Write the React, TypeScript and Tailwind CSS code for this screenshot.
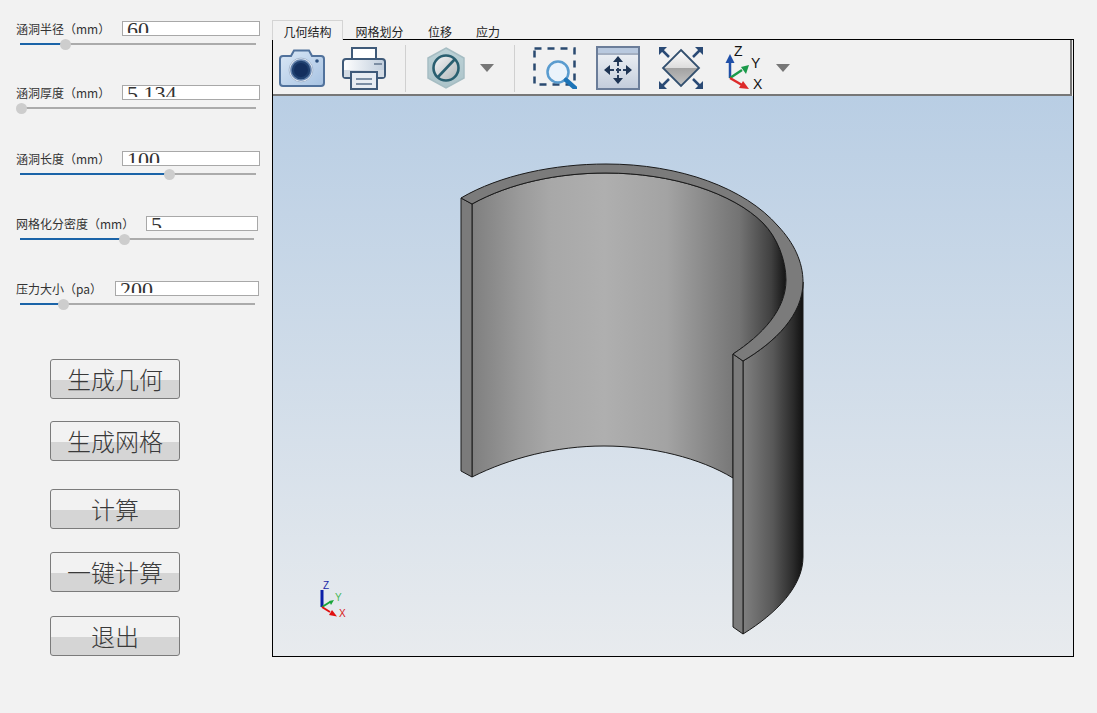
const cjk = "font-['Microsoft_YaHei','Noto_Sans_CJK_SC',sans-serif]";

const params = [
  { label: "涵洞半径（mm）", value: "60", rowClass: "h-[64px]", labelClass: "w-[106px]", inputClass: "w-[138px]", trackClass: "w-[236px]", pct: 45 },
  { label: "涵洞厚度（mm）", value: "5.134", rowClass: "h-[66px]", labelClass: "w-[106px]", inputClass: "w-[138px]", trackClass: "w-[236px]", pct: 1 },
  { label: "涵洞长度（mm）", value: "100", rowClass: "h-[65px]", labelClass: "w-[106px]", inputClass: "w-[138px]", trackClass: "w-[236px]", pct: 149 },
  { label: "网格化分密度（mm）", value: "5", rowClass: "h-[65px]", labelClass: "w-[130px]", inputClass: "w-[112px]", trackClass: "w-[234px]", pct: 104 },
  { label: "压力大小（pa）", value: "200", rowClass: "h-[30px]", labelClass: "w-[99px]", inputClass: "w-[144px]", trackClass: "w-[235px]", pct: 43 },
];

const buttons = [
  { text: "生成几何", mt: "mt-0" },
  { text: "生成网格", mt: "mt-[22px]" },
  { text: "计算", mt: "mt-[28px]" },
  { text: "一键计算", mt: "mt-[23px]" },
  { text: "退出", mt: "mt-[24px]" },
];

function Camera() {
  return (
    <svg width="48" height="40" viewBox="0 0 48 40" className="shrink-0">
      <defs>
        <linearGradient id="camBody" x1="0" y1="0" x2="1" y2="1">
          <stop offset="0" stopColor="#dbe8f6" />
          <stop offset="1" stopColor="#a6c2e2" />
        </linearGradient>
      </defs>
      <path d="M2 11q0-3 3-3h8l3-5.500h15l3 5.500h9q3 0 3 3v24q0 3-3 3H5q-3 0-3-3z" fill="url(#camBody)" stroke="#51729c" strokeWidth="2" />
      <circle cx="23" cy="22" r="12" fill="#e8eef6" stroke="#a9bbd2" strokeWidth="1" />
      <circle cx="23" cy="22" r="10" fill="#20406f" stroke="#6482ac" strokeWidth="1.500" />
      <circle cx="23" cy="22" r="7" fill="#142f5e" />
      <circle cx="39" cy="13" r="1.800" fill="#2c507f" />
    </svg>
  );
}

function Printer() {
  return (
    <svg width="46" height="46" viewBox="0 0 46 46" className="shrink-0">
      <defs>
        <linearGradient id="prBody" x1="0" y1="0" x2="1" y2="0">
          <stop offset="0" stopColor="#ffffff" />
          <stop offset="1" stopColor="#c0cddc" />
        </linearGradient>
      </defs>
      <path d="M11 14V3h24v11" fill="#fff" stroke="#3f5a79" strokeWidth="2" />
      <path d="M9 33H5q-3 0-3-3V17q0-3 3-3h36q3 0 3 3v13q0 3-3 3h-4" fill="url(#prBody)" stroke="#3f5a79" strokeWidth="2" />
      <path d="M3 25h40v7H3z" fill="#d3dbe4" />
      <rect x="33" y="18" width="8" height="2" fill="#7d8ea3" />
      <path d="M10 27h26v17H10z" fill="#e7ecf2" stroke="#3f5a79" strokeWidth="2" />
      <path d="M15 34h16M15 39h16" stroke="#7a8da3" strokeWidth="2" />
    </svg>
  );
}

function Forbidden() {
  return (
    <svg width="38" height="42" viewBox="0 0 38 42" className="shrink-0">
      <defs>
        <linearGradient id="hexFill" x1="0" y1="0" x2="0" y2="1">
          <stop offset="0" stopColor="#bcd2d7" />
          <stop offset="1" stopColor="#acc3c9" />
        </linearGradient>
        <linearGradient id="discFill" x1="0" y1="0" x2="1" y2="1">
          <stop offset="0" stopColor="#f6f7f8" />
          <stop offset="1" stopColor="#aeb4b7" />
        </linearGradient>
      </defs>
      <path d="M19 1l18 10v20L19 41 1 31V11z" fill="url(#hexFill)" stroke="#a6bdc3" strokeWidth="1.500" />
      <circle cx="19" cy="21" r="12.500" fill="url(#discFill)" stroke="#2a5f70" strokeWidth="2.600" />
      <path d="M11 30L28 12" stroke="#2a5f70" strokeWidth="2.600" />
    </svg>
  );
}

function Caret() {
  return (
    <svg width="14" height="8" viewBox="0 0 14 8" className="shrink-0">
      <path d="M0 0h14L7 8z" fill="#777" />
    </svg>
  );
}

function ZoomArea() {
  return (
    <svg width="44" height="42" viewBox="0 0 44 42" className="shrink-0">
      <rect x="1.500" y="1.500" width="40" height="36" fill="none" stroke="#2a4a70" strokeWidth="2.500" strokeDasharray="7 6" />
      <circle cx="25" cy="25" r="10.500" fill="#eaf3fb" stroke="#5a9ccf" strokeWidth="2.500" />
      <path d="M33 33l9 8" stroke="#1d74b7" strokeWidth="4.500" strokeLinecap="round" />
    </svg>
  );
}

function FitWindow() {
  return (
    <svg width="44" height="44" viewBox="0 0 44 44" className="shrink-0">
      <defs>
        <linearGradient id="fitFill" x1="0" y1="0" x2="0" y2="1">
          <stop offset="0" stopColor="#f3f5f8" />
          <stop offset="1" stopColor="#c2ccdb" />
        </linearGradient>
      </defs>
      <rect x="1" y="1" width="42" height="42" fill="url(#fitFill)" stroke="#6b7d99" strokeWidth="2" />
      <rect x="2" y="2" width="40" height="5" fill="#b9c9df" />
      <path d="M2 8h40" stroke="#5d7190" strokeWidth="1" />
      <path d="M22 15v18M13 24h18" stroke="#2a3f5f" strokeWidth="2" strokeDasharray="5 2" />
      <path d="M22 10l5 6h-10zM22 38l5-6h-10zM8 24l6-5v10zM36 24l-6-5v10z" fill="#1e3454" />
    </svg>
  );
}

function Diamond() {
  return (
    <svg width="46" height="44" viewBox="0 0 46 44" className="shrink-0">
      <defs>
        <linearGradient id="diaTop" x1="0" y1="0" x2="0" y2="1">
          <stop offset="0" stopColor="#ffffff" />
          <stop offset="1" stopColor="#dcdcdc" />
        </linearGradient>
        <linearGradient id="diaBottom" x1="0" y1="0" x2="0" y2="1">
          <stop offset="0" stopColor="#a2a2a2" />
          <stop offset="1" stopColor="#c4c4c4" />
        </linearGradient>
      </defs>
      <path d="M23 4L41 22H5z" fill="url(#diaTop)" />
      <path d="M5 22h36L23 40z" fill="url(#diaBottom)" />
      <path d="M23 4L41 22 23 40 5 22z" fill="none" stroke="#33506f" strokeWidth="1.800" />
      <g stroke="#2a4a75" strokeWidth="2.500">
        <path d="M4 4l7 7M42 4l-7 7M4 40l7-7M42 40l-7-7" />
      </g>
      <g fill="#2a4a75">
        <path d="M1 1h8L1 9zM45 1h-8l8 8zM1 43h8l-8-8zM45 43h-8l8-8z" />
      </g>
    </svg>
  );
}

function ToolbarTriad() {
  return (
    <svg width="40" height="48" viewBox="0 0 40 48" className="shrink-0">
      <path d="M6 34V17" stroke="#1f4fa8" strokeWidth="2.500" />
      <path d="M6 10l4.500 9h-9z" fill="#1f4fa8" />
      <path d="M6 34l12-8" stroke="#1a9a4a" strokeWidth="2.500" />
      <path d="M25 21l-3 9-5-7z" fill="#1a9a4a" />
      <path d="M6 34l12 7" stroke="#dd2a2a" strokeWidth="2.500" />
      <path d="M25 45l-10-1 4-7z" fill="#dd2a2a" />
      <text x="10" y="12" fontSize="14" fontFamily="Liberation Sans, sans-serif" fill="#111">Z</text>
      <text x="27" y="24" fontSize="14" fontFamily="Liberation Sans, sans-serif" fill="#111">Y</text>
      <text x="29" y="45" fontSize="14" fontFamily="Liberation Sans, sans-serif" fill="#111">X</text>
    </svg>
  );
}

function Model() {
  // coordinates are the page's, the viewBox starts at the viewport origin (273, 96)
  return (
    <svg viewBox="273 96 800 560" className="block h-full w-full">
      <defs>
        <linearGradient id="innerWall" gradientUnits="userSpaceOnUse" x1="472" y1="0" x2="787" y2="0">
          <stop offset="0" stopColor="#7f7f7f" />
          <stop offset="0.15" stopColor="#9a9a9a" />
          <stop offset="0.25" stopColor="#a8a8a8" />
          <stop offset="0.42" stopColor="#afafaf" />
          <stop offset="0.62" stopColor="#a3a3a3" />
          <stop offset="0.85" stopColor="#737373" />
          <stop offset="0.95" stopColor="#404040" />
          <stop offset="1" stopColor="#111111" />
        </linearGradient>
        <linearGradient id="outerWall" gradientUnits="userSpaceOnUse" x1="743" y1="0" x2="803" y2="0">
          <stop offset="0" stopColor="#808080" />
          <stop offset="0.5" stopColor="#585858" />
          <stop offset="0.83" stopColor="#2c2c2c" />
          <stop offset="1" stopColor="#111111" />
        </linearGradient>
      </defs>

      {/* inner face */}
      <path
        d="M472 204C510 183 558 173 606 173C672 173 733 193 763 223C777 237 786 260 786 280C786 310 762 335 733 354V478C700 458 652 446 604 446C556 446 510 458 472 477Z"
        fill="url(#innerWall)"
        stroke="#1a1a1a"
        strokeWidth="1"
      />
      {/* outer face */}
      <path
        d="M743 361C775 342 803 315 803 282V557C803 586 777 613 743 634Z"
        fill="url(#outerWall)"
        stroke="#1a1a1a"
        strokeWidth="1"
      />
      {/* cut faces */}
      <path d="M461 198L472 204V477L461 471Z" fill="#7b7b7b" stroke="#1a1a1a" strokeWidth="1" />
      <path d="M733 354L743 361V634L733 627Z" fill="#7b7b7b" stroke="#1a1a1a" strokeWidth="1" />
      {/* rim */}
      <path
        d="M461 198C500 175 555 164 606 164C680 164 745 188 778 226C794 243 803 262 803 282C803 315 775 342 743 361L733 354C762 335 786 310 786 280C786 260 777 237 763 223C733 193 672 173 606 173C558 173 510 183 472 204Z"
        fill="#7b7b7b"
        stroke="#1a1a1a"
        strokeWidth="1"
      />

      {/* corner triad */}
      <path d="M322 607V590" stroke="#0b1fa8" strokeWidth="3" />
      <path d="M322 607l8-5" stroke="#18a53a" strokeWidth="2" />
      <path d="M322 607l8 5" stroke="#e01010" strokeWidth="2" />
      <path d="M337 616.500l-8-1.500 3-5z" fill="#e01010" />
      <path d="M334 600l-5 1 2 4z" fill="#18a53a" />
      <text x="323" y="589" fontSize="10" fontFamily="Liberation Sans, sans-serif" fill="#1a2aa8">Z</text>
      <text x="335" y="601" fontSize="10" fontFamily="Liberation Sans, sans-serif" fill="#4ab85a">Y</text>
      <text x="339" y="617" fontSize="10" fontFamily="Liberation Sans, sans-serif" fill="#d81818">X</text>
    </svg>
  );
}

export default function App() {
  return (
    <div className={`flex h-[713px] w-[1097px] overflow-hidden bg-[#f2f2f2] ${cjk}`}>
      {/* Parameter panel */}
      <div className="flex w-[272px] shrink-0 flex-col pt-[21px]">
        {params.map((p) => (
          <div key={p.label} className={`${p.rowClass} shrink-0 pl-[16px]`}>
            <div className="flex h-[15px] items-center">
              <span className={`${p.labelClass} shrink-0 whitespace-nowrap text-[12px] leading-[16px] text-[#333]`}>{p.label}</span>
              <div className={`${p.inputClass} h-[15px] shrink-0 border border-[#a8a8a8] bg-white pl-[4px]`}>
                <div className="h-[11px] overflow-hidden font-['Liberation_Serif',serif] text-[22px] leading-[15px] text-[#333]">
                  {p.value}
                </div>
              </div>
            </div>
            <div className={`${p.trackClass} ml-[4px] mt-[5px] flex h-[6px] items-center`}>
              <div className="h-[2px] shrink-0 bg-[#1b64a8]" style={{ width: p.pct }} />
              <div className="z-10 -mx-[5.5px] size-[11px] shrink-0 rounded-full bg-[#cdcdcd]" />
              <div className="h-[2px] flex-1 bg-[#ababab]" />
            </div>
          </div>
        ))}

        <div className="mt-[48px] flex flex-col pl-[50px]">
          {buttons.map((b) => (
            <div
              key={b.text}
              className={`${b.mt} flex h-[40px] w-[130px] items-center justify-center rounded-[3px] border border-[#7b7b7b] bg-[linear-gradient(#f2f2f2_0,#f2f2f2_52%,#d5d5d5_52%,#d5d5d5_100%)] text-[24px] font-light leading-none text-[#3a3a3a]`}
            >
              {b.text}
            </div>
          ))}
        </div>
      </div>

      {/* Viewer */}
      <div className="flex w-[802px] flex-col pt-[20px]">
        <div className="flex h-[19px] shrink-0 items-start text-[12px] leading-[18px] text-[#222]">
          <div className="relative z-10 h-[20px] w-[71px] border border-b-0 border-[#d4d4d4] bg-[#f2f2f2] pt-[2px] text-center">
            几何结构
          </div>
          <div className="ml-[12px] mt-[3px] w-[49px] text-center">网格划分</div>
          <div className="ml-[24px] mt-[3px] w-[24px] text-center">位移</div>
          <div className="ml-[24px] mt-[3px] w-[24px] text-center">应力</div>
        </div>
        <div className="flex h-[618px] shrink-0 flex-col border border-black">
          <div className="mr-px flex h-[56px] shrink-0 items-center border-b-2 border-r-2 border-[#777] bg-[#f1f1f1] pl-[5px] pt-[2px]">
            <Camera />
            <div className="ml-[15px]"><Printer /></div>
            <div className="ml-[18px] h-[47px] w-px bg-[#d0d0d0]" />
            <div className="ml-[21px]"><Forbidden /></div>
            <div className="ml-[15px]"><Caret /></div>
            <div className="ml-[20px] h-[47px] w-px bg-[#d0d0d0]" />
            <div className="ml-[18px]"><ZoomArea /></div>
            <div className="ml-[19px]"><FitWindow /></div>
            <div className="ml-[18px]"><Diamond /></div>
            <div className="ml-[20px]"><ToolbarTriad /></div>
            <div className="ml-[12px]"><Caret /></div>
          </div>
          <div className="min-h-0 flex-1 bg-[linear-gradient(#b9cee4,#e8ebee)]">
            <Model />
          </div>
        </div>
      </div>
    </div>
  );
}
